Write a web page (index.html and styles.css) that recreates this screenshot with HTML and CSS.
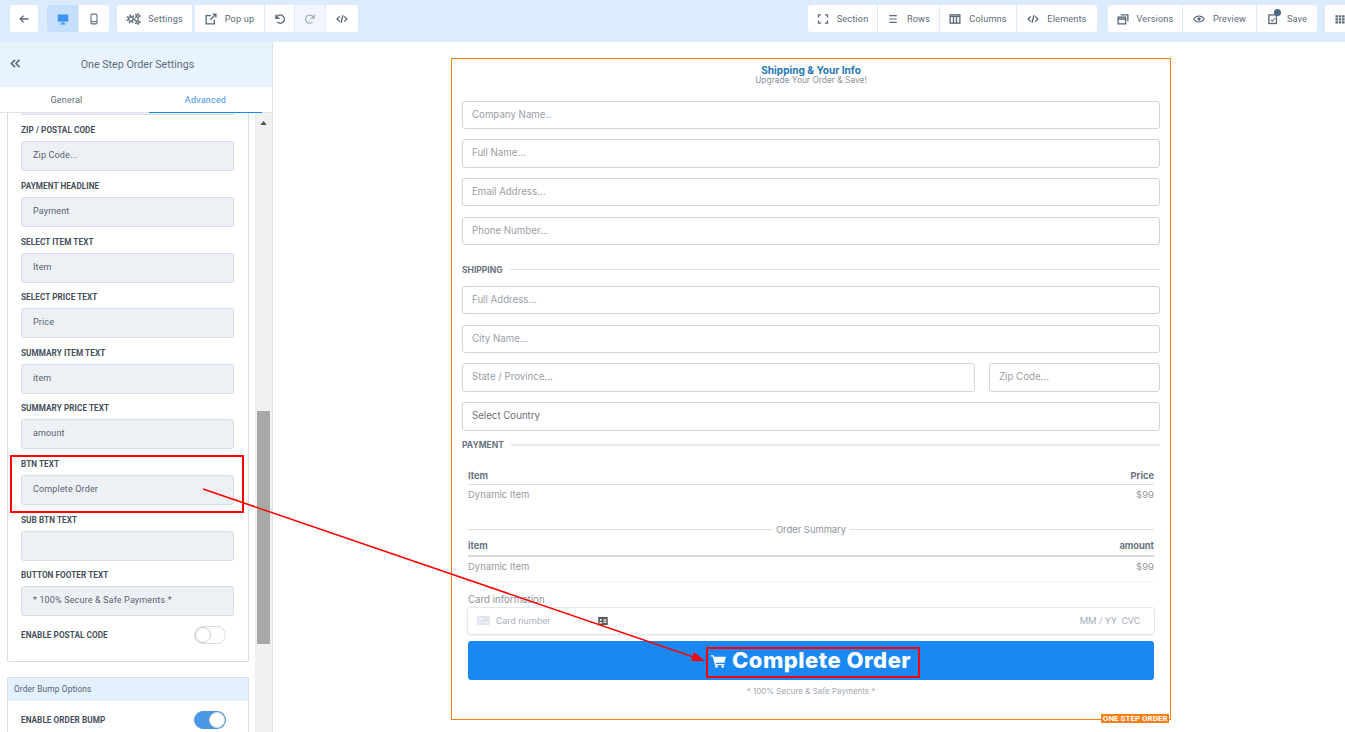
FILE: index.html
```html
<!DOCTYPE html>
<html lang="en">
<head>
<meta charset="utf-8">
<title>One Step Order Settings</title>
<link rel="stylesheet" href="styles.css">
</head>
<body>
<header class="topbar">
  <div class="group">
    <button class="tb tb-back"><svg class="ic" viewBox="0 0 16 16"><path d="M14 8H3M7.500 3.500 3 8l4.500 4.500" class="st st2"/></svg></button>
  </div>
  <div class="group g-device">
    <button class="tb tb-desk"><svg class="ic ic-blue" viewBox="0 0 16 16"><path d="M1 2h14v9.500H1z" fill="currentColor"/><path d="M4.500 14.500h7M8 11.500v3" class="st st2"/></svg></button>
    <button class="tb tb-mob"><svg class="ic" viewBox="0 0 16 16"><rect x="4" y="1.500" width="8" height="13" rx="1.500" class="st"/><path d="M4 11.500h8" class="st"/></svg></button>
  </div>
  <div class="group g-edit">
    <button class="tb tb-settings"><svg class="ic ic-w" viewBox="0 0 20 16"><circle cx="6.500" cy="8" r="3" class="st st2"/><circle cx="6.500" cy="8" r="5" class="teeth"/><circle cx="15.500" cy="4" r="1.800" class="st st2"/><circle cx="15.500" cy="4" r="3.200" class="teeth teeth-s"/><circle cx="15.500" cy="12" r="1.800" class="st st2"/><circle cx="15.500" cy="12" r="3.200" class="teeth teeth-s"/></svg><span>Settings</span></button>
    <button class="tb tb-popup"><svg class="ic" viewBox="0 0 16 16"><path d="M12.500 9v5.500h-11v-11H8M7 9l7-7M10 1.500h4.500V6" class="st st2"/></svg><span>Pop up</span></button>
    <button class="tb tb-icon"><svg class="ic" viewBox="0 0 16 16"><path d="M2.500 2v5h5M3 7a5.500 5.500 0 1 1 1.500 5" class="st st2"/></svg></button>
    <button class="tb tb-icon tb-off"><svg class="ic" viewBox="0 0 16 16"><path d="M13.500 2v5h-5M13 7a5.500 5.500 0 1 0-1.500 5" class="st"/></svg></button>
    <button class="tb tb-code"><svg class="ic" viewBox="0 0 16 16"><path d="M5 4.500 1.500 8 5 11.500M11 4.500 14.500 8 11 11.500M9.300 3 6.700 13" class="st st2"/></svg></button>
  </div>
  <div class="group g-build">
    <button class="tb tb-section"><svg class="ic" viewBox="0 0 16 16"><path d="M2 6V2.500h3.500M10.500 2.500H14V6M14 10v3.500h-3.500M5.500 13.500H2V10" class="st st2"/></svg><span>Section</span></button>
    <button class="tb tb-rows"><svg class="ic" viewBox="0 0 16 16"><path d="M3 3.500h10M3 8h10M3 12.500h10" class="st"/></svg><span>Rows</span></button>
    <button class="tb tb-cols"><svg class="ic" viewBox="0 0 16 16"><rect x="1.500" y="2.500" width="13" height="11" class="st st2"/><path d="M1.500 4.500h13" class="st st2"/><path d="M6 4.500v9M10 4.500v9" class="st st2"/></svg><span>Columns</span></button>
    <button class="tb tb-elems"><svg class="ic" viewBox="0 0 16 16"><path d="M5 4.500 1.500 8 5 11.500M11 4.500 14.500 8 11 11.500M9.300 3 6.700 13" class="st st2"/></svg><span>Elements</span></button>
  </div>
  <div class="group g-save">
    <button class="tb tb-versions"><svg class="ic" viewBox="0 0 16 16"><rect x="1.500" y="5.500" width="10" height="9" class="st st2"/><path d="M1.500 8h10M5 2.500h9.500V11" class="st st2"/></svg><span>Versions</span></button>
    <button class="tb tb-preview"><svg class="ic" viewBox="0 0 16 16"><path d="M1 8s2.500-4 7-4 7 4 7 4-2.500 4-7 4-7-4-7-4Z" class="st"/><circle cx="8" cy="8" r="2.200" fill="currentColor"/></svg><span>Preview</span></button>
    <button class="tb tb-save"><svg class="ic" viewBox="0 0 16 16"><rect x="2.500" y="2.500" width="10" height="11.500" class="st st2"/><path d="M5 9l2 2 3.500-4" class="st"/></svg><i class="dot"></i><span>Save</span></button>
  </div>
  <div class="group g-apps">
    <button class="tb tb-apps"><svg class="ic" viewBox="0 0 16 16"><path d="M2 3h3.300v3H2zM6.400 3h3.300v3H6.400zM10.800 3h3.300v3h-3.300zM2 7h3.300v3H2zM6.400 7h3.300v3H6.400zM10.800 7h3.300v3h-3.300zM2 11h3.300v3H2zM6.400 11h3.300v3H6.400zM10.800 11h3.300v3h-3.300z" fill="currentColor"/></svg></button>
  </div>
</header>

<div class="workspace">
  <aside class="sidebar">
    <div class="side-head">
      <svg class="collapse" viewBox="0 0 12 10"><path d="M5.500 1 1.500 5l4 4M10.500 1l-4 4 4 4" class="st st2"/></svg>
      <span class="side-title">One Step Order Settings</span>
    </div>
    <div class="tabs">
      <span class="tab">General</span>
      <span class="tab tab-on">Advanced</span>
    </div>
    <div class="side-body">
      <div class="side-scroll">
        <div class="panel">
          <div class="cut"></div>
          <div class="field"><label>ZIP / POSTAL CODE</label><div class="val">Zip Code...</div></div>
          <div class="field"><label>PAYMENT HEADLINE</label><div class="val">Payment</div></div>
          <div class="field"><label>SELECT ITEM TEXT</label><div class="val">Item</div></div>
          <div class="field"><label>SELECT PRICE TEXT</label><div class="val">Price</div></div>
          <div class="field"><label>SUMMARY ITEM TEXT</label><div class="val">item</div></div>
          <div class="field"><label>SUMMARY PRICE TEXT</label><div class="val">amount</div></div>
          <div class="field"><label>BTN TEXT</label><div class="val">Complete Order</div></div>
          <div class="field"><label>SUB BTN TEXT</label><div class="val"></div></div>
          <div class="field"><label>BUTTON FOOTER TEXT</label><div class="val">* 100% Secure &amp; Safe Payments *</div></div>
          <div class="toggle-row"><label>ENABLE POSTAL CODE</label><span class="switch"><i></i></span></div>
        </div>
        <div class="panel panel-bump">
          <div class="bump-head">Order Bump Options</div>
          <div class="toggle-row toggle-bump"><label>ENABLE ORDER BUMP</label><span class="switch switch-on"><i></i></span></div>
        </div>
      </div>
      <div class="scrollbar">
        <svg class="sb-up" viewBox="0 0 8 5"><path d="M4 0 8 5H0z"/></svg>
        <div class="sb-thumb"></div>
      </div>
    </div>
  </aside>

  <main class="canvas">
    <section class="order">
      <h1 class="o-title">Shipping &amp; Your Info</h1>
      <p class="o-sub">Upgrade Your Order &amp; Save!</p>
      <div class="inp">Company Name..</div>
      <div class="inp">Full Name...</div>
      <div class="inp">Email Address...</div>
      <div class="inp">Phone Number...</div>
      <div class="sep sep-ship"><span>SHIPPING</span></div>
      <div class="inp">Full Address...</div>
      <div class="inp">City Name...</div>
      <div class="inp-row">
        <div class="inp">State / Province...</div>
        <div class="inp inp-zip">Zip Code...</div>
      </div>
      <div class="inp inp-country">Select Country</div>
      <div class="sep sep-pay"><span>PAYMENT</span></div>
      <div class="pay">
        <div class="t-head"><span>Item</span><span>Price</span></div>
        <div class="t-row"><span>Dynamic Item</span><span>$99</span></div>
        <div class="summary"><span>Order Summary</span></div>
        <div class="t-head t-head2"><span>item</span><span>amount</span></div>
        <div class="t-row t-row2"><span>Dynamic Item</span><span>$99</span></div>
        <div class="card-label">Card information</div>
        <div class="card">
          <svg class="card-ic" viewBox="0 0 14 10"><rect width="14" height="10" rx="1" fill="#dfe3ea"/><rect x="1.500" y="1.500" width="4" height="3" fill="#f4f5f8"/><rect x="1.500" y="7" width="11" height="1" fill="#f4f5f8"/></svg>
          <span class="card-num">Card number</span>
          <svg class="card-id" viewBox="0 0 12 10"><rect width="12" height="10" rx="1" fill="#555"/><circle cx="3.200" cy="3.600" r="1.300" fill="#fff"/><path d="M1.300 8c0-2.400 3.800-2.400 3.800 0zM6.500 2.500h4v1h-4zM6.500 4.500h4v1h-4zM6.500 6.500h4v1h-4z" fill="#fff"/></svg>
          <span class="card-exp">MM / YY&nbsp; CVC</span>
        </div>
        <button class="cta">
          <svg class="cart" viewBox="0 0 18 16"><path d="M0 1h3l.6 2H18l-2 7H5.700l.4 1.500H16V13H4.800L2 2.500H0z" fill="#fff"/><circle cx="6.500" cy="14.500" r="1.500" fill="#fff"/><circle cx="14" cy="14.500" r="1.500" fill="#fff"/></svg>
          <span>Complete Order</span>
        </button>
        <p class="foot">* 100% Secure &amp; Safe Payments *</p>
      </div>
      <span class="tag">ONE STEP ORDER</span>
    </section>
  </main>
</div>

<div class="mark mark-field"></div>
<div class="mark mark-btn"></div>
<svg class="arrow" viewBox="0 0 1345 732"><path d="M203 489 695 657.500" stroke="#f00" stroke-width="1.500" fill="none"/><path d="M705 661 691 661 694 652z" fill="#f00"/></svg>
</body>
</html>
```
FILE: styles.css
```css
* { box-sizing: border-box; }
html, body { margin: 0; height: 100%; }
body {
  width: 1345px;
  height: 732px;
  overflow: hidden;
  background: #fff;
  font-family: Roboto, "Liberation Sans", sans-serif;
  position: relative;
  display: flex;
  flex-direction: column;
}
.st { fill: none; stroke: currentColor; stroke-width: 1.400; }
.st2 { stroke-width: 1.800; }
.teeth { fill: none; stroke: currentColor; stroke-width: 2; stroke-dasharray: 2 2.240; }
.teeth-s { stroke-width: 1.500; stroke-dasharray: 1.500 1.850; }

/* top bar */
.topbar {
  height: 42px;
  flex: none;
  background: #dcecfd;
  display: flex;
  align-items: flex-start;
  padding: 5px 0 0 10px;
}
.group { display: flex; gap: 1px; flex: none; }
.g-device { margin-left: 9px; gap: 0; }
.g-edit { margin-left: 8px; }
.g-build { margin-left: 450px; }
.g-save { margin-left: 11px; }
.g-apps { margin-left: 8px; }
.tb {
  height: 27px;
  border: 0;
  padding: 0;
  background: #fff;
  color: #5d6b78;
  font: 400 9.200px Roboto, sans-serif;
  letter-spacing: .15px;
  display: flex;
  align-items: center;
  justify-content: center;
  gap: 8px;
  position: relative;
}
.ic { width: 12px; height: 12px; flex: none; }
.ic-w { width: 15px; }
.group > .tb:first-child { border-radius: 3px 0 0 3px; }
.group > .tb:last-child { border-radius: 0 3px 3px 0; }
.tb-back { width: 28px; border-radius: 3px !important; }
.tb-desk { width: 31px; background: #c6e0fb; color: #3d94ee; margin-right: 1px; }
.tb-mob { width: 30px; }
.tb-settings { width: 75px; margin-right: 2px; gap: 7px; }
.tb-popup { width: 69px; }
.tb-icon { width: 29px; }
.tb-off { background: #f2f7fe; color: #9aa5b1; width: 30px; }
.tb-code { width: 32px; }
.tb-section { width: 69px; }
.tb-rows { width: 61px; }
.tb-cols { width: 76px; }
.tb-elems { width: 80px; }
.tb-versions { width: 74px; }
.tb-preview { width: 73px; }
.tb-save { width: 60px; }
.tb-apps { width: 30px; justify-content: flex-start; padding-left: 9px; }
.dot {
  position: absolute;
  left: 17px;
  top: 4px;
  width: 7px;
  height: 7px;
  border-radius: 50%;
  background: #4c6a85;
}

/* layout */
.workspace { flex: 1; display: flex; min-height: 0; }

/* sidebar */
.sidebar {
  width: 273px;
  flex: none;
  display: flex;
  flex-direction: column;
  border-right: 1px solid #dfe3e8;
  min-height: 0;
}
.side-head {
  height: 45px;
  flex: none;
  background: #e8f3fe;
  display: flex;
  align-items: center;
  justify-content: center;
  position: relative;
  padding-left: 3px;
}
.collapse { position: absolute; left: 10px; top: 17px; width: 11px; height: 9px; color: #5d6b78; }
.side-title { font-size: 10.700px; color: #5d6b78; }
.tabs { height: 26px; flex: none; display: flex; background: #fff; border-bottom: 1px solid #dfe3e8; padding-right: 10px; }
.tab {
  flex: 1;
  font-size: 9px;
  color: #5d6b78;
  display: flex;
  align-items: center;
  justify-content: center;
  letter-spacing: .2px;
  padding-top: 1px;
}
.tab:first-child { flex: 0 0 149px; padding-right: 16px; }
.tab-on { color: #3d94ee; border-bottom: 1px solid #1a8cf0; height: 26px; }
.side-body { flex: 1; display: flex; min-height: 0; overflow: hidden; }
.side-scroll { width: 255px; flex: none; padding-left: 7px; }
.panel {
  width: 242px;
  border: 1px solid #d5dde6;
  border-top: 0;
  border-radius: 0 0 2px 2px;
  padding: 0 14px 0 13px;
  height: 549px;
}
.cut {
  height: 2px;
  border: 1px solid #d5dde6;
  border-top: 0;
  background: #edf1f6;
  border-radius: 0 0 3px 3px;
  margin-bottom: 10.400px;
}
.field { height: 55.600px; }
.field label, .toggle-row label {
  display: block;
  font-size: 8.200px;
  font-weight: 700;
  line-height: 11px;
  color: #46505b;
  letter-spacing: .05px;
  margin: 0 0 5px;
}
.val {
  height: 30px;
  background: #edf1f6;
  border: 1px solid #d5dde6;
  border-radius: 3px;
  font-size: 9px;
  color: #55626f;
  line-height: 27px;
  padding-left: 11px;
  letter-spacing: .15px;
}
.toggle-row { display: flex; justify-content: space-between; align-items: center; margin-top: 0.600px; height: 18px; padding-right: 8px; }
.toggle-row label { margin: 0; }
.switch {
  width: 32px;
  height: 18px;
  border-radius: 9px;
  border: 1px solid #d8dde3;
  background: #fff;
  position: relative;
  display: block;
}
.switch i {
  position: absolute;
  left: 0;
  top: 0;
  width: 16px;
  height: 16px;
  border-radius: 50%;
  background: #fff;
  border: 1px solid #c8cdd3;
}
.switch-on { background: #4a98e6; border-color: #4a98e6; }
.switch-on i { left: 14px; border-color: #d8dde3; }
.panel-bump {
  margin-top: 15px;
  padding: 0;
  border-top: 1px solid #d5dde6;
  height: 80px;
  border-radius: 2px 2px 0 0;
}
.bump-head {
  height: 23px;
  background: #e3f0fd;
  font-size: 8.300px;
  color: #55626f;
  line-height: 23px;
  padding-left: 6px;
  letter-spacing: .15px;
}
.toggle-bump { margin: 10px 14px 0 13px; }
.scrollbar {
  width: 17px;
  flex: none;
  background: #f1f1f1;
  position: relative;
}
.sb-up { position: absolute; left: 5px; top: 8px; width: 7px; height: 4px; fill: #505050; }
.sb-thumb { position: absolute; left: 2px; right: 2px; top: 298px; height: 233px; background: #a8a8a8; }

/* canvas */
.canvas { flex: 1; padding: 16px 0 0 178px; min-width: 0; }
.order {
  width: 720px;
  height: 662px;
  border: 1px solid #f77f17;
  padding: 6px 10px 0;
  position: relative;
  font-family: Inter, "Open Sans", sans-serif;
}
.o-title {
  margin: 0;
  text-align: center;
  font-size: 10.100px;
  line-height: 11px;
  font-weight: 700;
  color: #1f78b4;
}
.o-sub {
  margin: 0 0 15.600px;
  text-align: center;
  font-size: 8.400px;
  line-height: 9px;
  color: #8a939c;
}
.inp {
  height: 28.500px;
  border: 1px solid #cfd4dd;
  border-radius: 3px;
  margin-bottom: 10.200px;
  padding-left: 9px;
  font-size: 9.700px;
  line-height: 26px;
  color: #9a9ea5;
}
.inp-row { display: flex; gap: 14px; }
.inp-row .inp { flex: 1; }
.inp-zip { flex: 0 0 171px !important; }
.inp-country { margin-bottom: 0; color: #6c7178; }
.sep { display: flex; align-items: center; gap: 7px; font-size: 8.500px; font-weight: 700; color: #6a7480; }
.sep::after { content: ""; flex: 1; height: 1px; background: #e0e2e7; }
.sep-ship { height: 12px; margin: 18.800px 0 10px; }
.sep-pay { height: 12px; margin: 8px 0 0; }
.sep-pay::after { height: 2px; background: #e6e8ec; }
.pay { padding: 18px 6px 0; }
.t-head {
  display: flex;
  justify-content: space-between;
  font-size: 9.300px;
  font-weight: 700;
  color: #6a7480;
  height: 16px;
  line-height: 14px;
  border-bottom: 1px solid #dcdee2;
}
.t-row {
  display: flex;
  justify-content: space-between;
  font-size: 9.500px;
  color: #949aa2;
  line-height: 12px;
  padding-top: 4px;
}
.summary {
  display: flex;
  align-items: center;
  gap: 4px;
  font-size: 9.400px;
  line-height: 12px;
  color: #8c949c;
  margin-top: 23px;
  height: 12px;
}
.summary::before, .summary::after { content: ""; flex: 1; height: 1px; background: #d9dbe0; }
.t-head2 { margin-top: 3.500px; height: 17.500px; line-height: 14px; border-bottom: 2px solid #d8d8d8; }
.t-row2 { height: 25px; border-bottom: 1px solid #f0f1f3; }
.card-label { font-size: 9.700px; line-height: 12px; color: #8c949c; margin-top: 12px; }
.card {
  margin: 1px -1px 0 -1px;
  height: 28px;
  border: 1px solid #e4e6ea;
  border-radius: 3px;
  box-shadow: 0 1px 1px rgba(0,0,0,.05);
  display: flex;
  align-items: center;
  padding-left: 9px;
  font-size: 9.300px;
  color: #a9b1bd;
  font-family: Roboto, sans-serif;
}
.card-ic { width: 13px; height: 9px; flex: none; }
.card-num { margin-left: 6px; letter-spacing: .1px; }
.card-id { width: 10px; height: 8px; margin-left: 47px; flex: none; }
.card-exp { margin-left: auto; margin-right: 14px; font-size: 9.700px; letter-spacing: -.05px; }
.cta {
  display: flex;
  width: 100%;
  height: 39px;
  margin: 6px 0 0;
  border: 0;
  border-radius: 3px;
  background: #1a88f3;
  color: #fff;
  align-items: center;
  justify-content: center;
  gap: 6px;
  font: 800 22px Inter, sans-serif;
  letter-spacing: .5px;
  padding: 0;
}
.cart { width: 15px; height: 14px; margin-top: 2px; }
.foot { margin: 6px 0 0; text-align: center; font-size: 8px; line-height: 10px; color: #a2a8ae; }
.tag {
  position: absolute;
  right: 1px;
  bottom: -4px;
  background: #f77f17;
  color: #fff;
  font: 700 8px/9px Roboto, sans-serif;
  padding: 0 1.500px;
}

/* annotations */
.mark { position: absolute; border: 2px solid #f00; pointer-events: none; }
.mark-field { left: 10px; top: 455px; width: 234px; height: 58px; }
.mark-btn { left: 706px; top: 647px; width: 214px; height: 31px; }
.arrow { position: absolute; left: 0; top: 0; width: 1345px; height: 732px; pointer-events: none; }
```
